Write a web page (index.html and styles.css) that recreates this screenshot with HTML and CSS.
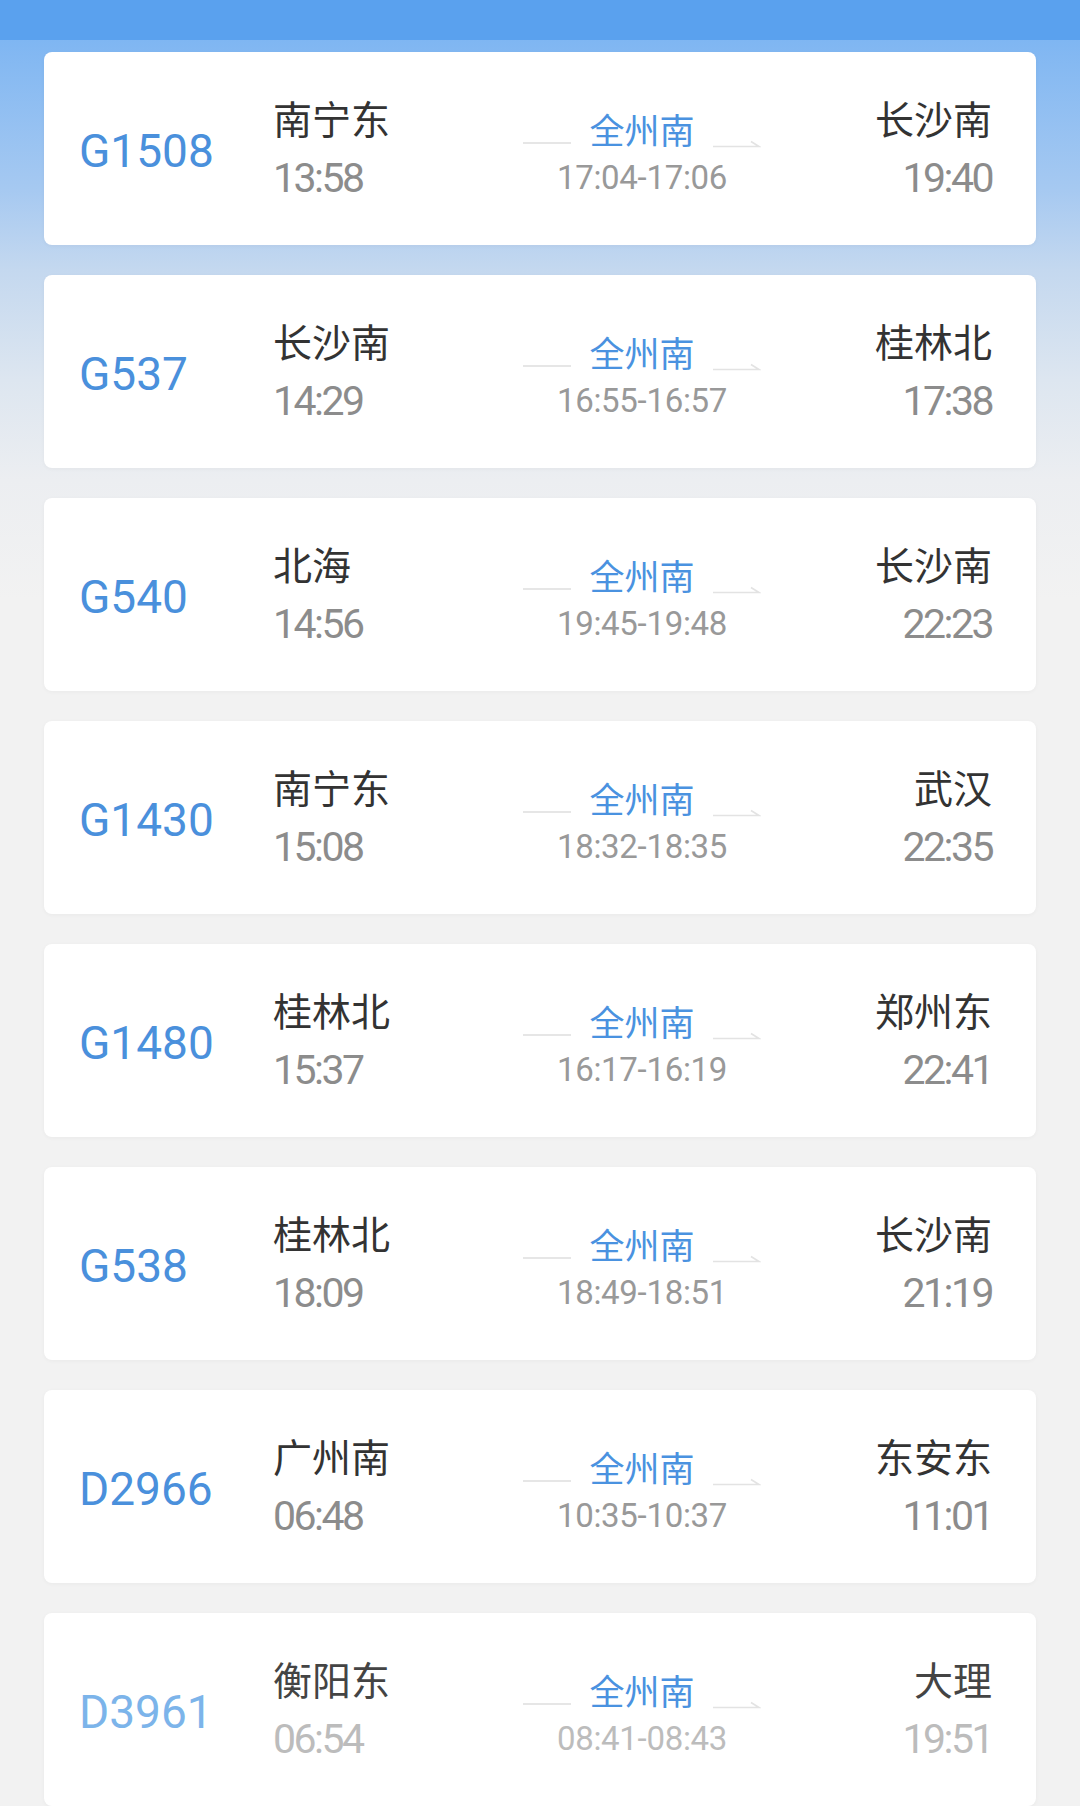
FILE: index.html
```html
<!DOCTYPE html>
<html lang="zh-CN">

<head>
    <meta charset="UTF-8">
    <meta name="viewport" content="width=device-width, initial-scale=1.0">
    <title>全州南 经停车次</title>
    <link rel="stylesheet" href="styles.css">
</head>

<body>

    <div class="topbar"></div>

    <div class="list">

        <div class="card">
            <div class="no">G1508</div>
            <div class="end">
                <div class="name">南宁东</div>
                <div class="time">13:58</div>
            </div>
            <div class="mid">
                <div class="mid-row">
                    <span class="line"></span>
                    <span class="mid-name">全州南</span>
                    <svg class="arrow" width="48" height="10" viewBox="0 0 48 10"><path d="M0 8.5H46L38 3.5" fill="none" stroke="#e3e3e3" stroke-width="1.6"/></svg>
                </div>
                <div class="mid-time">17:04-17:06</div>
            </div>
            <div class="end right">
                <div class="name">长沙南</div>
                <div class="time">19:40</div>
            </div>
        </div>

        <div class="card">
            <div class="no">G537</div>
            <div class="end">
                <div class="name">长沙南</div>
                <div class="time">14:29</div>
            </div>
            <div class="mid">
                <div class="mid-row">
                    <span class="line"></span>
                    <span class="mid-name">全州南</span>
                    <svg class="arrow" width="48" height="10" viewBox="0 0 48 10"><path d="M0 8.5H46L38 3.5" fill="none" stroke="#e3e3e3" stroke-width="1.6"/></svg>
                </div>
                <div class="mid-time">16:55-16:57</div>
            </div>
            <div class="end right">
                <div class="name">桂林北</div>
                <div class="time">17:38</div>
            </div>
        </div>

        <div class="card">
            <div class="no">G540</div>
            <div class="end">
                <div class="name">北海</div>
                <div class="time">14:56</div>
            </div>
            <div class="mid">
                <div class="mid-row">
                    <span class="line"></span>
                    <span class="mid-name">全州南</span>
                    <svg class="arrow" width="48" height="10" viewBox="0 0 48 10"><path d="M0 8.5H46L38 3.5" fill="none" stroke="#e3e3e3" stroke-width="1.6"/></svg>
                </div>
                <div class="mid-time">19:45-19:48</div>
            </div>
            <div class="end right">
                <div class="name">长沙南</div>
                <div class="time">22:23</div>
            </div>
        </div>

        <div class="card">
            <div class="no">G1430</div>
            <div class="end">
                <div class="name">南宁东</div>
                <div class="time">15:08</div>
            </div>
            <div class="mid">
                <div class="mid-row">
                    <span class="line"></span>
                    <span class="mid-name">全州南</span>
                    <svg class="arrow" width="48" height="10" viewBox="0 0 48 10"><path d="M0 8.5H46L38 3.5" fill="none" stroke="#e3e3e3" stroke-width="1.6"/></svg>
                </div>
                <div class="mid-time">18:32-18:35</div>
            </div>
            <div class="end right">
                <div class="name">武汉</div>
                <div class="time">22:35</div>
            </div>
        </div>

        <div class="card">
            <div class="no">G1480</div>
            <div class="end">
                <div class="name">桂林北</div>
                <div class="time">15:37</div>
            </div>
            <div class="mid">
                <div class="mid-row">
                    <span class="line"></span>
                    <span class="mid-name">全州南</span>
                    <svg class="arrow" width="48" height="10" viewBox="0 0 48 10"><path d="M0 8.5H46L38 3.5" fill="none" stroke="#e3e3e3" stroke-width="1.6"/></svg>
                </div>
                <div class="mid-time">16:17-16:19</div>
            </div>
            <div class="end right">
                <div class="name">郑州东</div>
                <div class="time">22:41</div>
            </div>
        </div>

        <div class="card">
            <div class="no">G538</div>
            <div class="end">
                <div class="name">桂林北</div>
                <div class="time">18:09</div>
            </div>
            <div class="mid">
                <div class="mid-row">
                    <span class="line"></span>
                    <span class="mid-name">全州南</span>
                    <svg class="arrow" width="48" height="10" viewBox="0 0 48 10"><path d="M0 8.5H46L38 3.5" fill="none" stroke="#e3e3e3" stroke-width="1.6"/></svg>
                </div>
                <div class="mid-time">18:49-18:51</div>
            </div>
            <div class="end right">
                <div class="name">长沙南</div>
                <div class="time">21:19</div>
            </div>
        </div>

        <div class="card">
            <div class="no">D2966</div>
            <div class="end">
                <div class="name">广州南</div>
                <div class="time">06:48</div>
            </div>
            <div class="mid">
                <div class="mid-row">
                    <span class="line"></span>
                    <span class="mid-name">全州南</span>
                    <svg class="arrow" width="48" height="10" viewBox="0 0 48 10"><path d="M0 8.5H46L38 3.5" fill="none" stroke="#e3e3e3" stroke-width="1.6"/></svg>
                </div>
                <div class="mid-time">10:35-10:37</div>
            </div>
            <div class="end right">
                <div class="name">东安东</div>
                <div class="time">11:01</div>
            </div>
        </div>

        <div class="card faded">
            <div class="no">D3961</div>
            <div class="end">
                <div class="name">衡阳东</div>
                <div class="time">06:54</div>
            </div>
            <div class="mid">
                <div class="mid-row">
                    <span class="line"></span>
                    <span class="mid-name">全州南</span>
                    <svg class="arrow" width="48" height="10" viewBox="0 0 48 10"><path d="M0 8.5H46L38 3.5" fill="none" stroke="#e3e3e3" stroke-width="1.6"/></svg>
                </div>
                <div class="mid-time">08:41-08:43</div>
            </div>
            <div class="end right">
                <div class="name">大理</div>
                <div class="time">19:51</div>
            </div>
        </div>

    </div>

</body>

</html>
```

FILE: styles.css
```css
* {
    box-sizing: border-box;
    margin: 0;
    padding: 0;
}

body {
    font-family: Roboto, "Noto Sans CJK SC", sans-serif;
    background: linear-gradient(to bottom,
            #7fb6f2 40px,
            #a6c9f1 190px,
            #c4d8ef 270px,
            #dde6f0 380px,
            #eceef1 480px,
            #f2f2f2 600px,
            #f2f2f2 100%);
    background-color: #f2f2f2;
    min-height: 1806px;
}

.topbar {
    height: 40px;
    background-color: #5aa1ee;
}

.list {
    display: flex;
    flex-direction: column;
    gap: 30px;
    padding: 12px 44px 0;
}

.card {
    background-color: #ffffff;
    border-radius: 8px;
    height: 193px;
    box-shadow: 0 1px 4px rgba(0, 0, 0, 0.04);
    display: grid;
    grid-template-columns: 194px 244px 250px 1fr;
    align-items: center;
    padding: 0 44px 0 35px;
}

.no {
    font-size: 46px;
    color: #4a90dc;
    padding-top: 4px;
}

.end {
    display: flex;
    flex-direction: column;
}

.end.right {
    align-items: flex-end;
}

.name {
    font-family: "Noto Sans CJK SC", sans-serif;
    font-size: 39px;
    line-height: 50px;
    color: #333333;
}

.time {
    font-size: 41px;
    line-height: 56px;
    margin-top: 8px;
    color: #8c8c8c;
    letter-spacing: -2.5px;
}

.mid {
    display: flex;
    flex-direction: column;
    align-items: center;
    padding-top: 7px;
}

.mid-row {
    display: flex;
    align-items: flex-end;
    gap: 18px;
}

.line {
    width: 48px;
    height: 2px;
    background-color: #e6e6e6;
    margin-bottom: 9px;
}

.arrow {
    margin-bottom: 5px;
}

.mid-name {
    font-family: "Noto Sans CJK SC", sans-serif;
    font-size: 35px;
    line-height: 48px;
    color: #4a92e0;
}

.mid-time {
    font-size: 33px;
    line-height: 44px;
    margin-top: 3px;
    color: #999999;
    letter-spacing: -0.3px;
}

.faded .no {
    color: #7cb4ea;
}

.faded .time,
.faded .mid-time {
    color: #bcbcbc;
}

.faded .name {
    color: #444444;
}
```
